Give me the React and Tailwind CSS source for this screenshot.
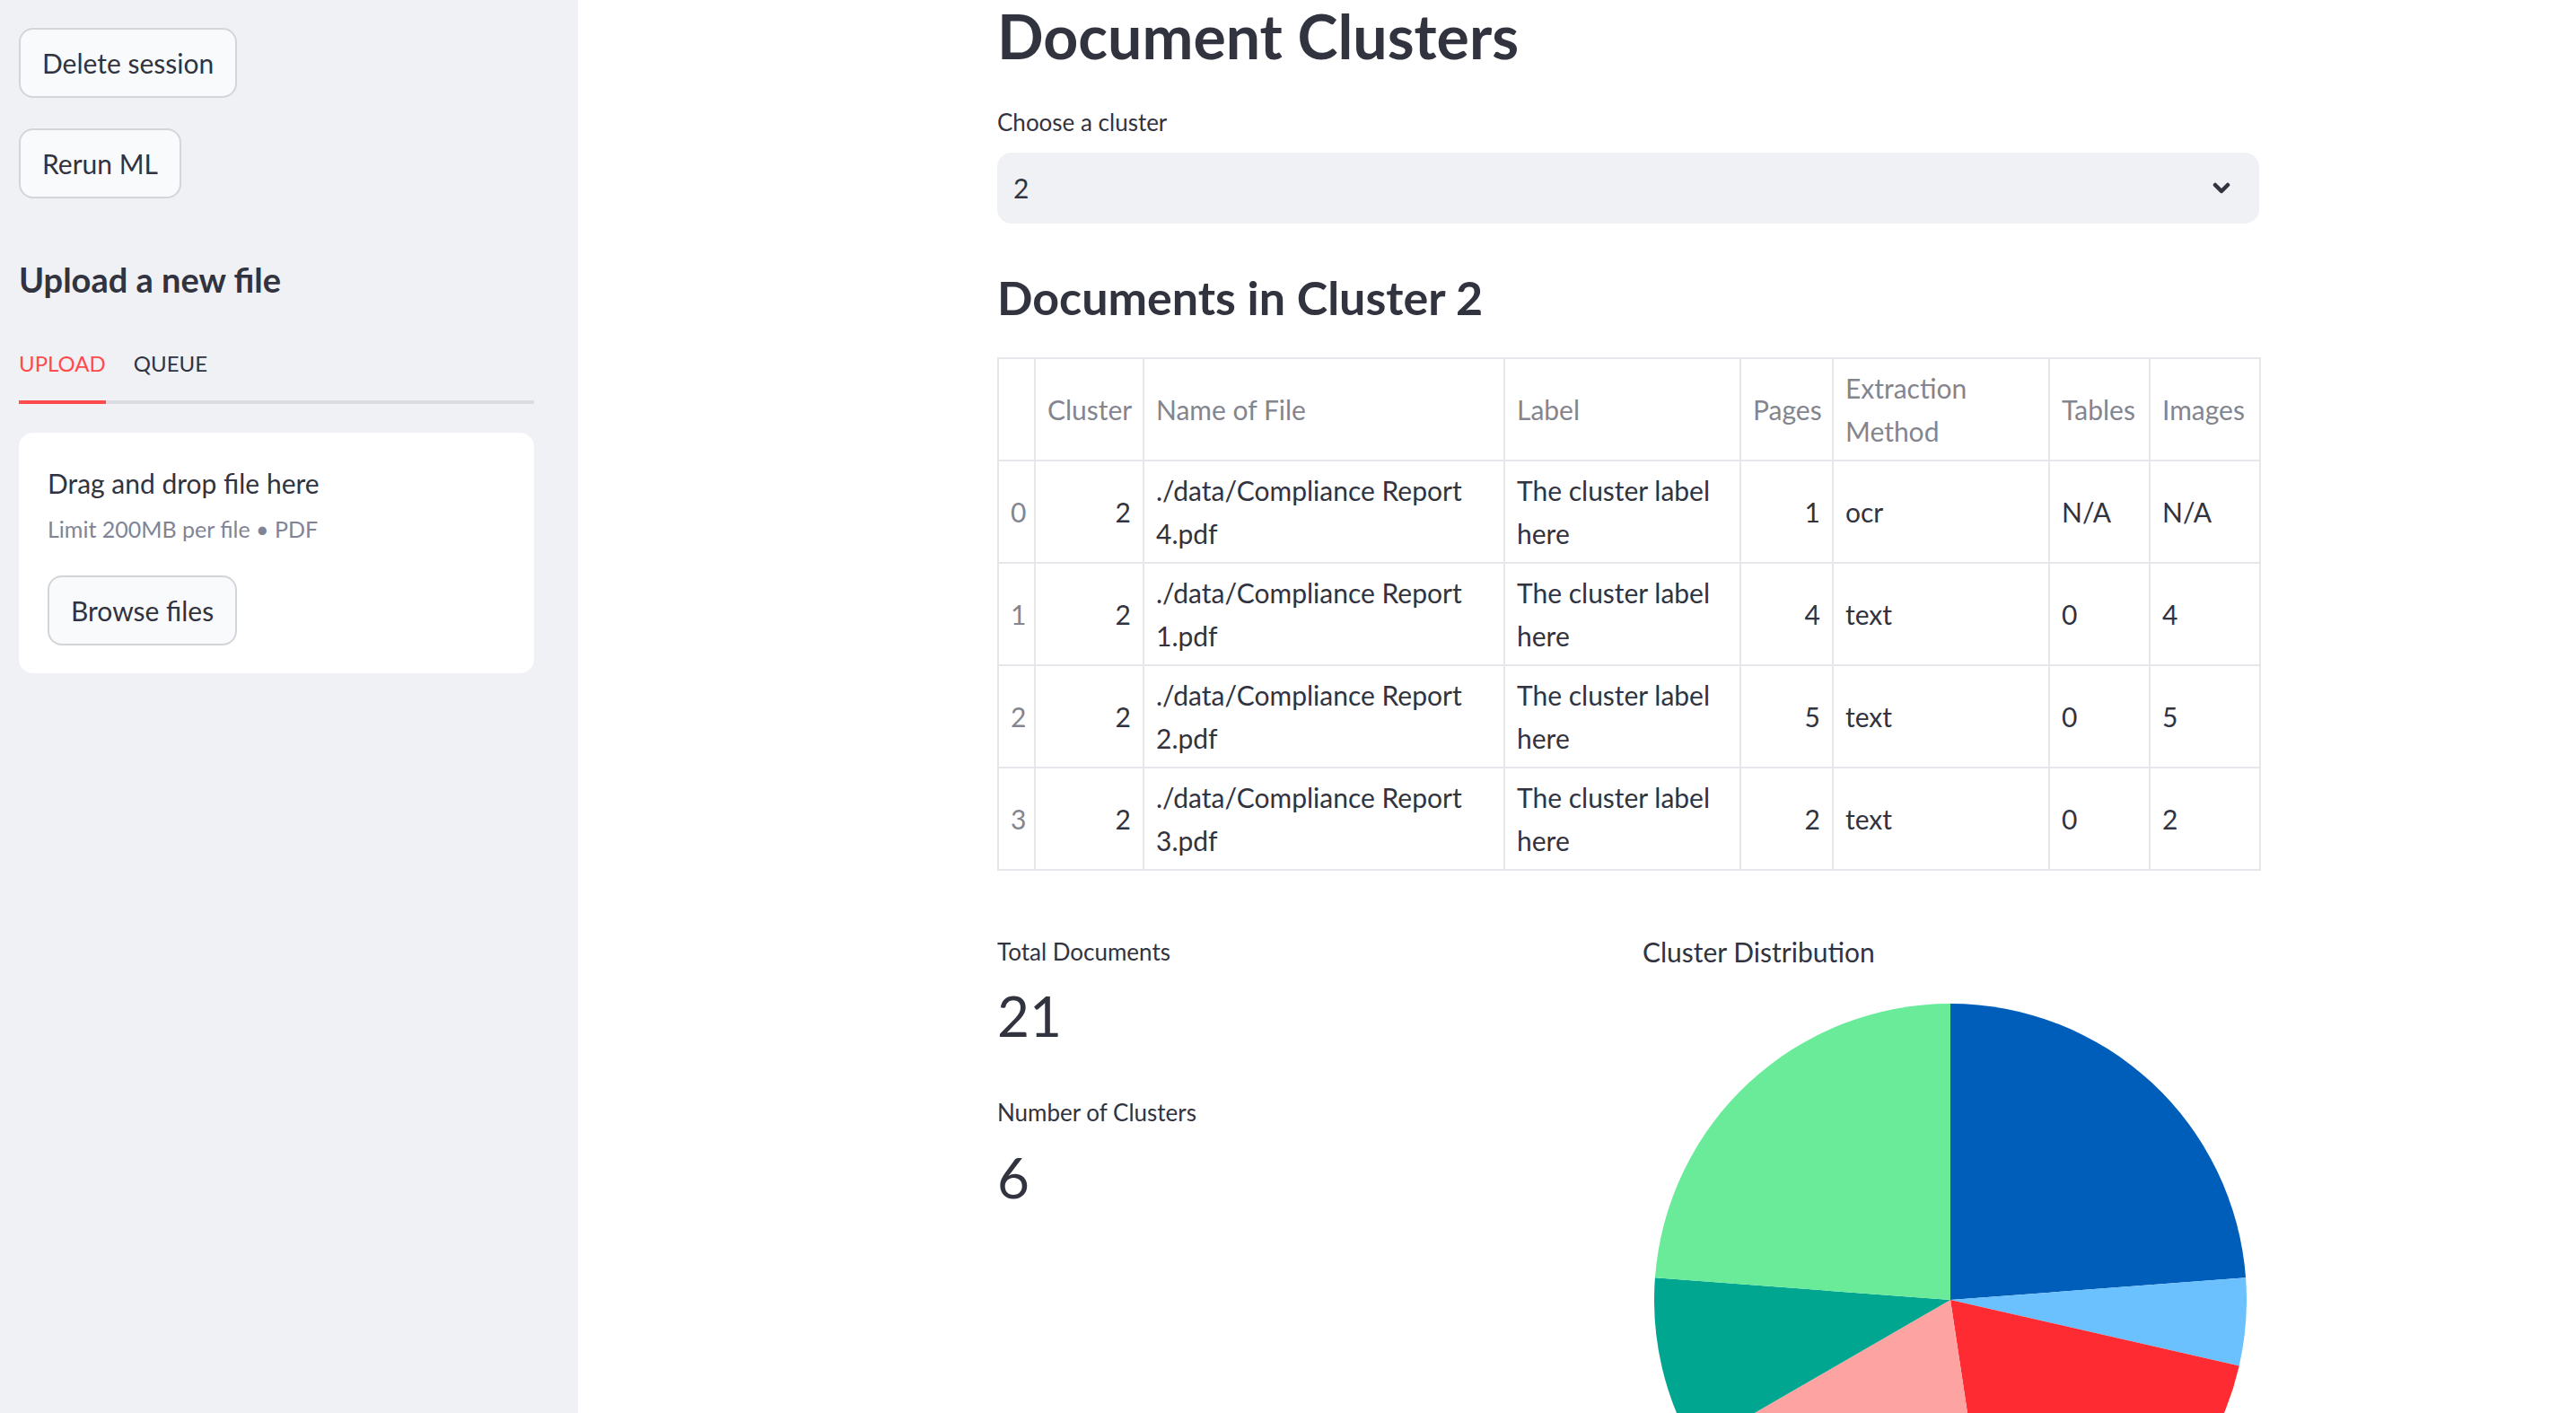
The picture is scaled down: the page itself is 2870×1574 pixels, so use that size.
import React from 'react';

const rows = [
  { idx: 0, cluster: 2, file: ['./data/Compliance Report', '4.pdf'], pages: 1, method: 'ocr', tables: 'N/A', images: 'N/A' },
  { idx: 1, cluster: 2, file: ['./data/Compliance Report', '1.pdf'], pages: 4, method: 'text', tables: '0', images: '4' },
  { idx: 2, cluster: 2, file: ['./data/Compliance Report', '2.pdf'], pages: 5, method: 'text', tables: '0', images: '5' },
  { idx: 3, cluster: 2, file: ['./data/Compliance Report', '3.pdf'], pages: 2, method: 'text', tables: '0', images: '2' },
];

// clockwise from 12 o'clock, like plotly draws it
const slices = [
  { value: 5, color: '#005ebb' },
  { value: 1, color: '#6bc1fd' },
  { value: 4, color: '#ff2b32' },
  { value: 4, color: '#fda4a3' },
  { value: 2, color: '#00a690' },
  { value: 5, color: '#69eb9a' },
];

const PieChart = () => {
  const total = slices.reduce((s, d) => s + d.value, 0);
  const r = 330;
  let start = 0;
  return (
    <svg width="660" height="660" viewBox="0 0 660 660">
      {slices.map((d, i) => {
        const end = start + (d.value / total) * Math.PI * 2;
        const x1 = r + r * Math.sin(start);
        const y1 = r - r * Math.cos(start);
        const x2 = r + r * Math.sin(end);
        const y2 = r - r * Math.cos(end);
        const large = end - start > Math.PI ? 1 : 0;
        const path = `M${r} ${r} L${x1} ${y1} A${r} ${r} 0 ${large} 1 ${x2} ${y2} Z`;
        start = end;
        return <path key={i} d={path} fill={d.color} />;
      })}
    </svg>
  );
};

const Button = ({ children }) => (
  <button className="h-[78px] px-[24px] rounded-[16px] border-2 border-[#d3d5da] bg-[#f9fafb] text-[30px] leading-none text-[#31333f]">
    {children}
  </button>
);

const th = 'border-2 border-[#e6e7eb] px-[13px] align-middle font-normal text-[#83858f]';
const td = 'border-2 border-[#e6e7eb] px-[13px] align-middle';

const App = () => {
  return (
    <div className="flex h-screen w-full overflow-hidden bg-white font-['Lato',sans-serif] text-[#31333f]">
      {/* sidebar */}
      <aside className="w-[644px] shrink-0 bg-[#eff1f5] pl-[21px] pt-[31px] flex flex-col items-start">
        <Button>Delete session</Button>
        <div className="mt-[34px]">
          <Button>Rerun ML</Button>
        </div>

        <h3 className="mt-[66px] text-[38px] leading-[48px] font-bold">Upload a new file</h3>

        <div className="mt-[53px] w-[574px] flex gap-[31px] border-b-4 border-[#dadce1]">
          <div className="-mb-[4px] pb-[24px] border-b-4 border-[#ff4b4b] text-[24px] leading-[34px] text-[#ff4b4b]">UPLOAD</div>
          <div className="pb-[24px] text-[24px] leading-[34px]">QUEUE</div>
        </div>

        <div className="mt-[32px] w-[574px] rounded-[16px] bg-white pl-[32px] pt-[36px] pb-[31px]">
          <div className="text-[30px] leading-[40px]">Drag and drop file here</div>
          <div className="mt-[14px] text-[25px] leading-[34px] text-[#808495]">Limit 200MB per file • PDF</div>
          <div className="mt-[35px]">
            <Button>Browse files</Button>
          </div>
        </div>
      </aside>

      {/* main */}
      <main className="flex-1">
        <div className="ml-[467px] w-[1406px] flex flex-col">
          <h1 className="text-[68px] leading-[80px] font-bold">Document Clusters</h1>

          <label className="mt-[36px] text-[26px] leading-[40px]">Choose a cluster</label>
          <div className="mt-[14px] h-[79px] rounded-[16px] bg-[#eff1f5] flex items-center justify-between pl-[18px] pr-[32px]">
            <span className="text-[30px]">2</span>
            <svg width="20" height="14" viewBox="0 0 20 14" fill="none">
              <path d="M3 3 L10 10 L17 3" stroke="#31333f" strokeWidth="4.5" strokeLinecap="round" strokeLinejoin="round" />
            </svg>
          </div>

          <h2 className="mt-[52px] text-[52px] leading-[60px] font-bold">Documents in Cluster 2</h2>

          <table className="mt-[37px] w-[1406px] table-fixed border-collapse text-[30px] leading-[48px]">
            <colgroup>
              <col className="w-[41px]" />
              <col className="w-[121px]" />
              <col className="w-[402px]" />
              <col className="w-[263px]" />
              <col className="w-[103px]" />
              <col className="w-[241px]" />
              <col className="w-[112px]" />
              <col className="w-[123px]" />
            </colgroup>
            <thead>
              <tr className="h-[114px]">
                <th className={th}></th>
                <th className={`${th} text-right`}>Cluster</th>
                <th className={`${th} text-left`}>Name of File</th>
                <th className={`${th} text-left`}>Label</th>
                <th className={`${th} text-right`}>Pages</th>
                <th className={`${th} text-left`}>Extraction<br />Method</th>
                <th className={`${th} text-left`}>Tables</th>
                <th className={`${th} text-left`}>Images</th>
              </tr>
            </thead>
            <tbody>
              {rows.map((row) => (
                <tr key={row.idx} className="h-[114px]">
                  <td className={`${td} text-[#83858f]`}>{row.idx}</td>
                  <td className={`${td} text-right`}>{row.cluster}</td>
                  <td className={`${td} whitespace-nowrap`}>{row.file[0]}<br />{row.file[1]}</td>
                  <td className={`${td} whitespace-nowrap`}>The cluster label<br />here</td>
                  <td className={`${td} text-right`}>{row.pages}</td>
                  <td className={td}>{row.method}</td>
                  <td className={td}>{row.tables}</td>
                  <td className={td}>{row.images}</td>
                </tr>
              ))}
            </tbody>
          </table>

          <div className="mt-[72px] grid grid-cols-2 gap-[32px]">
            <div className="flex flex-col">
              <div className="text-[26px] leading-[36px]">Total Documents</div>
              <div className="mt-[13px] text-[62px] leading-[80px]">21</div>
              <div className="mt-[50px] text-[26px] leading-[36px]">Number of Clusters</div>
              <div className="mt-[14px] text-[62px] leading-[80px]">6</div>
            </div>
            <div className="flex flex-col">
              <div className="text-[30px] leading-[36px]">Cluster Distribution</div>
              <div className="mt-[40px] ml-[13px]">
                <PieChart />
              </div>
            </div>
          </div>
        </div>
      </main>
    </div>
  );
};

export default App;
